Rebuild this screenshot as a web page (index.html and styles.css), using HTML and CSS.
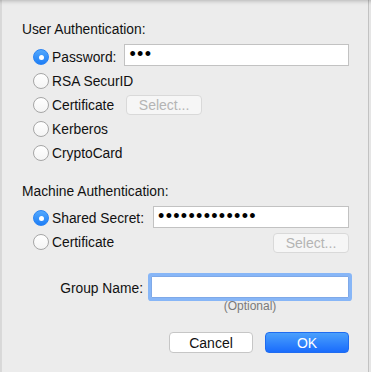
FILE: index.html
```html
<!DOCTYPE html>
<html lang="en">
<head>
    <meta charset="UTF-8">
    <meta name="viewport" content="width=device-width, initial-scale=1.0">
    <title>Authentication</title>
    <link rel="stylesheet" href="styles.css">
</head>
<body>
    <div class="dialog">
        <div class="section-title">User Authentication:</div>
        <div class="options">
            <div class="opt">
                <span class="radio on"></span>
                <span class="label">Password:</span>
                <div class="field secret">&bull;&bull;&bull;</div>
            </div>
            <div class="opt">
                <span class="radio"></span>
                <span class="label">RSA SecurID</span>
            </div>
            <div class="opt">
                <span class="radio"></span>
                <span class="label">Certificate</span>
                <button class="btn select" disabled>Select...</button>
            </div>
            <div class="opt">
                <span class="radio"></span>
                <span class="label">Kerberos</span>
            </div>
            <div class="opt">
                <span class="radio"></span>
                <span class="label">CryptoCard</span>
            </div>
        </div>

        <div class="section-title machine">Machine Authentication:</div>
        <div class="options">
            <div class="opt">
                <span class="radio on"></span>
                <span class="label">Shared Secret:</span>
                <div class="field secret wide">&bull;&bull;&bull;&bull;&bull;&bull;&bull;&bull;&bull;&bull;&bull;&bull;&bull;</div>
            </div>
            <div class="opt">
                <span class="radio"></span>
                <span class="label">Certificate</span>
                <button class="btn select push" disabled>Select...</button>
            </div>
        </div>

        <div class="group-row">
            <span class="group-label">Group Name:</span>
            <div class="field focused"></div>
        </div>
        <div class="hint">(Optional)</div>

        <div class="actions">
            <button class="btn">Cancel</button>
            <button class="btn primary">OK</button>
        </div>
    </div>
</body>
</html>
```

FILE: styles.css
```css
body {
    margin: 0;
    background: #ececec;
    font-family: "Liberation Sans", Arial, sans-serif;
    color: #111;
}
/* window frame */
.dialog {
    height: 372px;
    box-sizing: border-box;
    padding: 21px 22px 0 22px;
    font-size: 13.8px;
    box-shadow: inset 0 5px 4px -4px rgba(0, 0, 0, 0.25),
                inset 2px 0 0 #d9d9d9,
                inset -2px 0 0 #e6e6e6,
                inset -3px 0 0 #c2c2c2;
}
.section-title {
    line-height: 17px;
    margin-bottom: 7px;
}
.section-title.machine {
    margin-top: 18px;
    margin-bottom: 6px;
}
.options {
    padding-left: 11px;
}
.opt {
    display: flex;
    align-items: center;
    height: 24px;
}
.radio {
    width: 16px;
    height: 16px;
    box-sizing: border-box;
    border-radius: 50%;
    border: 1px solid #a6a6a6;
    background: linear-gradient(#ffffff, #f4f4f4);
    flex: none;
    position: relative;
}
.radio.on {
    border-color: #2a84f4;
    background: linear-gradient(#52a8fd, #1e7ef6);
}
.radio.on::after {
    content: "";
    position: absolute;
    left: 4.5px;
    top: 4.5px;
    width: 5px;
    height: 5px;
    border-radius: 50%;
    background: #fff;
}
.label {
    margin-left: 3px;
}
.field {
    flex: 1;
    height: 22px;
    box-sizing: border-box;
    background: #fff;
    border: 1px solid #c2c2c2;
    margin-left: 8px;
    margin-bottom: 4px;
}
.field.wide {
    margin-left: 9px;
    margin-bottom: 2px;
}
.secret {
    font-size: 18px;
    line-height: 19px;
    letter-spacing: 1.3px;
    padding-left: 4px;
    color: #000;
}
.btn {
    font-family: inherit;
    font-size: 14px;
    height: 21px;
    width: 84px;
    padding: 0;
    border: 1px solid #c6c6c6;
    border-radius: 4px;
    background: #fff;
    color: #111;
}
.btn.select {
    width: 76px;
    height: 20px;
    margin-left: 12px;
    background: #f6f6f6;
    border-color: #d9d9d9;
    color: #b4b4b4;
}
.btn.select.push {
    margin-left: auto;
    margin-top: 2px;
}
.group-row {
    display: flex;
    align-items: center;
    justify-content: flex-end;
    height: 24px;
    margin-top: 21px;
}
.group-label {
    margin-right: 8px;
    margin-top: 3px;
}
.field.focused {
    flex: none;
    width: 198px;
    margin: 0;
    border-color: #7fa9e8;
    box-shadow: 0 0 0 3px #87b6f7;
    border-radius: 1px;
}
.hint {
    width: 198px;
    margin-left: auto;
    margin-top: 1px;
    text-align: center;
    font-size: 12px;
    line-height: 12px;
    color: #7a7a7a;
}
.actions {
    display: flex;
    justify-content: flex-end;
    gap: 12px;
    margin-top: 20px;
}
.btn.primary {
    border-color: #1f6cf0;
    background: linear-gradient(#4aa0fc, #1a6cfc);
    color: #fff;
}
```
